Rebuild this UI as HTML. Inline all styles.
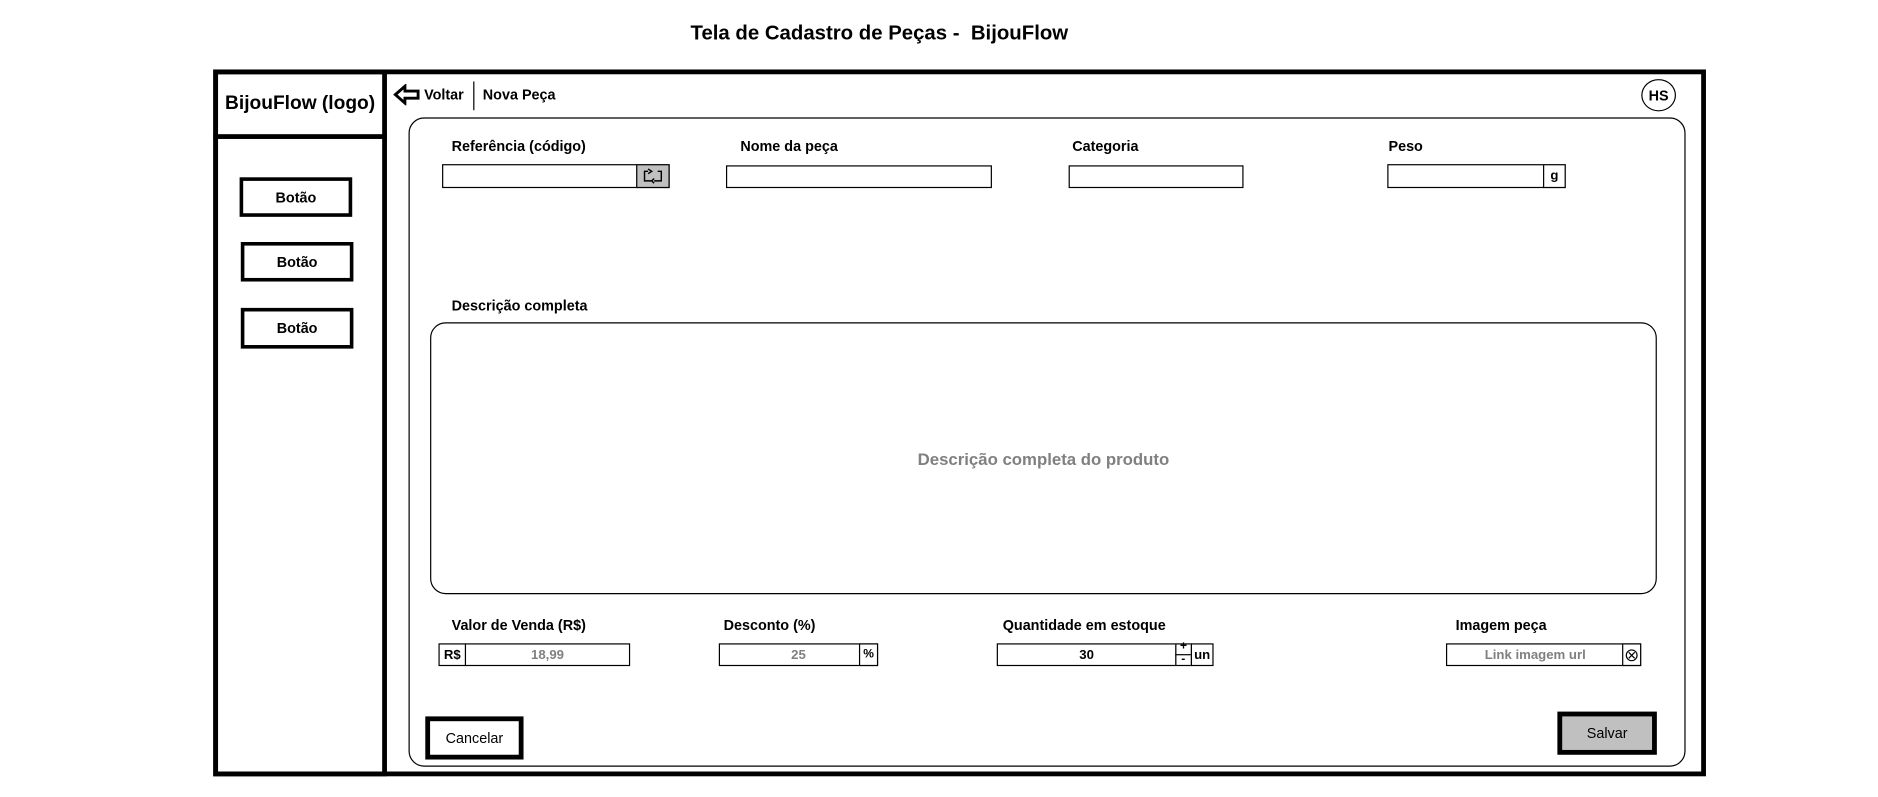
<!DOCTYPE html>
<html><head><meta charset="utf-8"><style>
html,body{margin:0;padding:0;background:#fff;width:1878px;height:796px;overflow:hidden}
#s{position:absolute;left:0;top:0;width:1568px;height:665px;transform:scale(1.198);transform-origin:0 0;font-family:"Liberation Sans",Arial,sans-serif;color:#000}
.a{position:absolute;box-sizing:border-box}
.b{font-weight:bold;font-size:12px}
.t{position:absolute;white-space:nowrap}
.in{position:absolute;box-sizing:border-box;border:1px solid #000;background:#fff}
.c{display:flex;align-items:center;justify-content:center}
</style></head><body><div id="s">
<div class="t" style="left:0;width:1468px;text-align:center;top:18px;font-size:17px;font-weight:bold">Tela de Cadastro de Peças -&nbsp; BijouFlow</div>

<div class="a" style="left:178px;top:58px;width:1246px;height:590px;border:4px solid #000"></div>
<div class="a" style="left:178px;top:58px;width:145px;height:590px;border:4px solid #000"></div>
<div class="a" style="left:178px;top:112px;width:145px;height:4px;background:#000"></div>
<div class="t" style="left:178px;width:145px;text-align:center;top:78px;font-size:16px;font-weight:bold">BijouFlow (logo)</div>

<div class="a c b" style="left:200px;top:148px;width:94px;height:33px;border:3px solid #000">Botão</div>
<div class="a c b" style="left:201px;top:202px;width:94px;height:33px;border:3px solid #000">Botão</div>
<div class="a c b" style="left:201px;top:257px;width:94px;height:34px;border:3px solid #000">Botão</div>

<svg class="a" style="left:328px;top:70px" width="24" height="18" viewBox="0 0 24 18"><path d="M2 9 L10 2 L10 6 L21 6 L21 12 L10 12 L10 16 Z" fill="none" stroke="#000" stroke-width="2.4" stroke-linejoin="miter"/></svg>
<div class="t b" style="left:354px;top:72px">Voltar</div>
<div class="a" style="left:395px;top:68px;width:1px;height:24px;background:#000"></div>
<div class="t b" style="left:403px;top:72px">Nova Peça</div>
<div class="a c b" style="left:1370px;top:66px;width:29px;height:27px;border:1px solid #000;border-radius:50%">HS</div>

<div class="a" style="left:341px;top:98px;width:1066px;height:542px;border:1px solid #000;border-radius:13px"></div>

<div class="t b" style="left:377px;top:115px">Referência (código)</div>
<div class="t b" style="left:618px;top:115px">Nome da peça</div>
<div class="t b" style="left:895px;top:115px">Categoria</div>
<div class="t b" style="left:1159px;top:115px">Peso</div>

<div class="in" style="left:369px;top:137px;width:190px;height:20px"></div>
<div class="in c" style="left:531px;top:137px;width:28px;height:20px;background:#c0c0c0"><svg width="20" height="14" viewBox="0 0 20 14"><path d="M6 3 H3 V11 H9 M14 3 H17 V11 H11 M6 1 L9 3 L6 5 M11 9 L9 11 L11 13" fill="none" stroke="#000" stroke-width="1.2"/></svg></div>
<div class="in" style="left:606px;top:138px;width:222px;height:19px"></div>
<div class="in" style="left:892px;top:138px;width:146px;height:19px"></div>
<div class="in" style="left:1158px;top:137px;width:149px;height:20px"></div>
<div class="in c b" style="left:1288px;top:137px;width:19px;height:20px;font-size:11px">g</div>

<div class="t b" style="left:377px;top:248px">Descrição completa</div>
<div class="a c" style="left:359px;top:269px;width:1024px;height:227px;border:1px solid #000;border-radius:13px;color:#808080;font-weight:bold;font-size:14px">Descrição completa do produto</div>

<div class="t b" style="left:377px;top:515px">Valor de Venda (R$)</div>
<div class="t b" style="left:604px;top:515px">Desconto (%)</div>
<div class="t b" style="left:837px;top:515px">Quantidade em estoque</div>
<div class="t b" style="left:1215px;top:515px">Imagem peça</div>

<div class="in c b" style="left:388px;top:537px;width:138px;height:19px;color:#808080;font-size:11px">18,99</div>
<div class="in c b" style="left:366px;top:537px;width:23px;height:19px;font-size:11px">R$</div>
<div class="in c b" style="left:600px;top:537px;width:133px;height:19px;color:#808080;font-size:11px">25</div>
<div class="in c b" style="left:717px;top:537px;width:16px;height:19px;font-size:10px">%</div>
<div class="in c b" style="left:832px;top:537px;width:150px;height:19px;font-size:11px">30</div>
<div class="in" style="left:981px;top:537px;width:14px;height:19px"></div>
<div class="a" style="left:981px;top:546px;width:14px;height:1px;background:#000"></div>
<div class="t b" style="left:985px;top:534px;font-size:10px">+</div>
<div class="t b" style="left:986px;top:545px;font-size:10px">-</div>
<div class="in c b" style="left:994px;top:537px;width:19px;height:19px;font-size:11px">un</div>
<div class="in c b" style="left:1207px;top:537px;width:163px;height:19px;color:#808080;font-size:11px;padding-right:14px">Link imagem url</div>
<div class="in c" style="left:1354px;top:537px;width:16px;height:19px"><svg width="12" height="12" viewBox="0 0 12 12"><circle cx="6" cy="6" r="4.5" fill="none" stroke="#000"/><path d="M3.5 3.5 L8.5 8.5 M8.5 3.5 L3.5 8.5" stroke="#000"/></svg></div>

<div class="a c" style="left:355px;top:598px;width:82px;height:36px;border:4px solid #000;font-size:12px">Cancelar</div>
<div class="a c" style="left:1300px;top:594px;width:83px;height:36px;border:4px solid #000;background:#c0c0c0;font-size:12px">Salvar</div>
</div></body></html>
